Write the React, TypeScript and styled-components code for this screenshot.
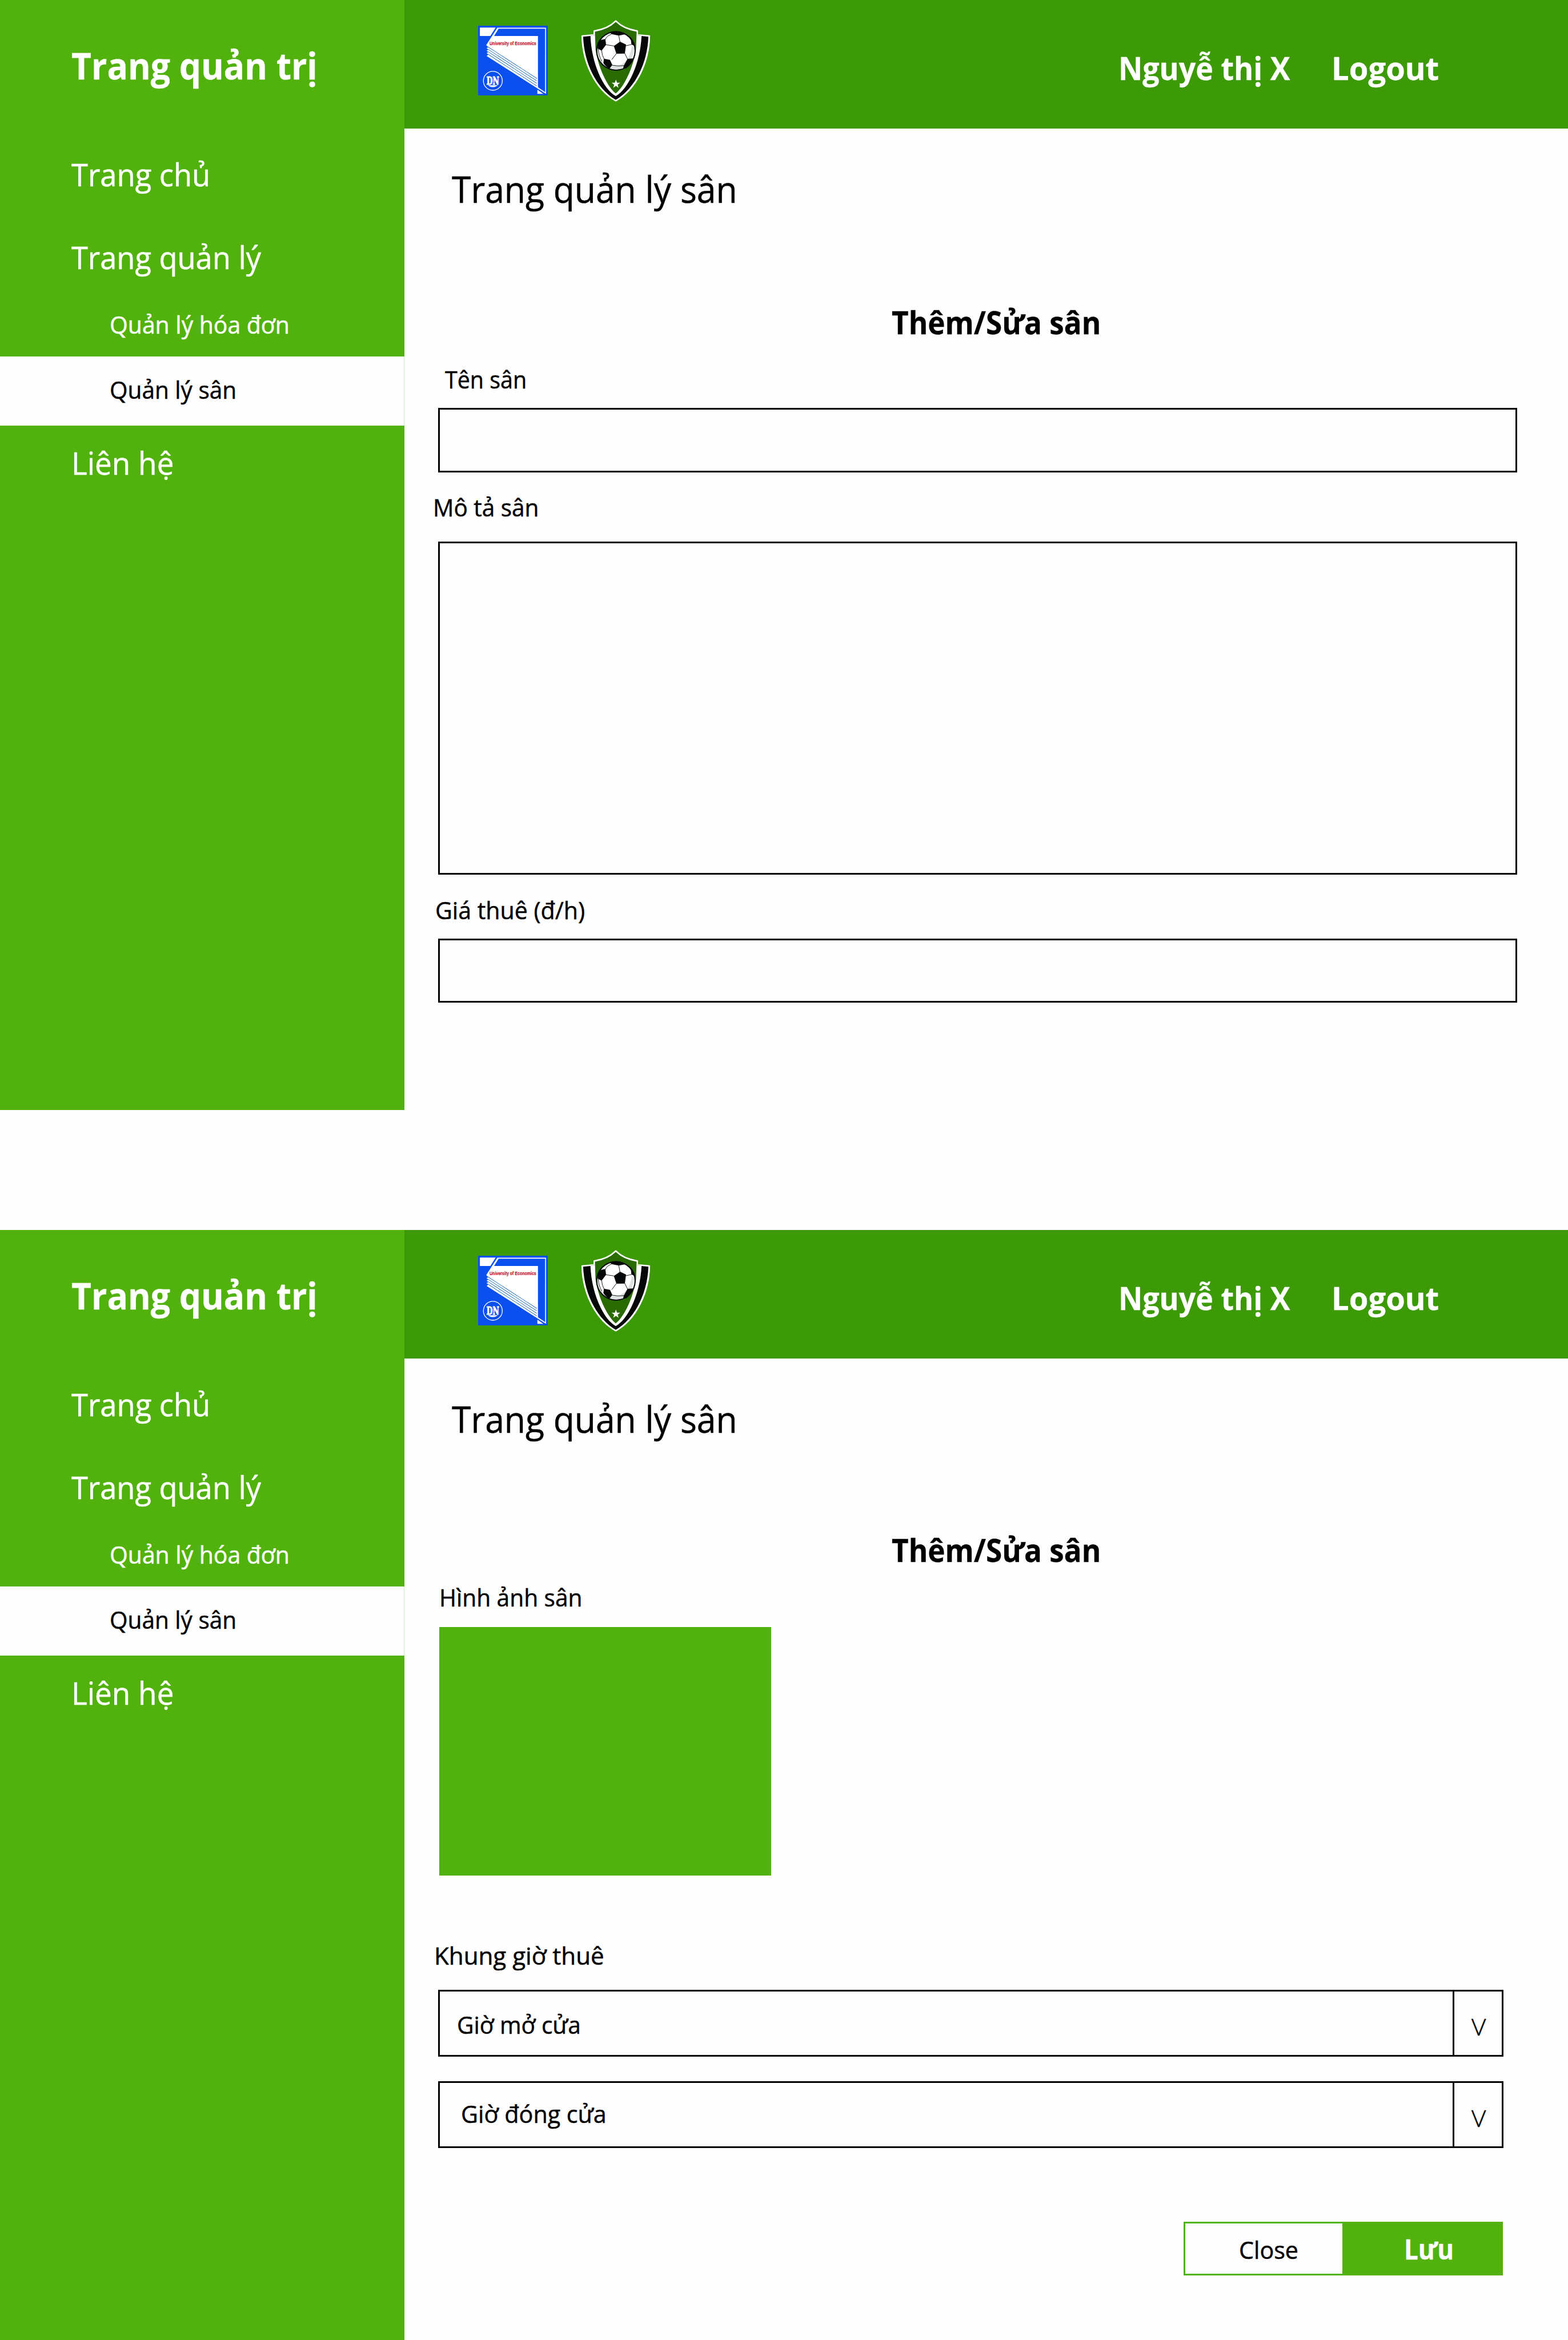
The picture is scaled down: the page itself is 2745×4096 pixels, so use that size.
import React from 'react';
import styled, { createGlobalStyle, css } from 'styled-components';

const GREEN = '#51b20e';
const DARK_GREEN = '#3b9a06';

const GlobalStyle = createGlobalStyle`
  *, *::before, *::after { box-sizing: border-box; }
  body {
    margin: 0;
    background: #fefefe;
    color: #000;
    font-family: "Open Sans", "Noto Sans", sans-serif;
  }
`;

/* Type scale: every line box is exactly one em high. */
const sizes = { title: 64, large: 55, button: 49, body: 42.7, arrow: 41 };

interface TextProps {
  $size?: keyof typeof sizes;
  $bold?: boolean;
  $fit?: number;
}

const Text = styled.span<TextProps>`
  display: block;
  width: max-content;
  white-space: nowrap;
  font-size: ${({ $size = 'body' }) => sizes[$size]}px;
  line-height: 1;
  font-weight: ${({ $bold }) => ($bold ? 700 : 400)};
  -webkit-text-stroke: ${({ $bold }) => ($bold ? 0.3 : 0.5)}px currentColor;
  transform: translateY(1px) scaleX(${({ $fit = 0.95 }) => $fit});
  transform-origin: left center;
`;

const Page = styled.div`
  display: flex;
  flex-direction: column;
  gap: 210px;
  width: 2745px;
  height: 4096px;
  overflow: hidden;
`;

const Screen = styled.section`
  display: grid;
  grid-template-columns: 708px 1fr;
  height: 1943px;
`;

const Sidebar = styled.aside`
  display: flex;
  flex-direction: column;
  background: ${GREEN};
  color: #fff;
`;

const Brand = styled.div`
  height: 225px;
  padding: 81.5px 0 0 124.8px;
`;

const NavItem = styled.div<{ $before: number }>`
  margin-top: ${({ $before }) => $before}px;
  padding-left: 125px;
`;

const SubItem = styled.div<{ $active?: boolean }>`
  height: 78px;
  padding-left: 191.6px;
  ${({ $active }) =>
    $active &&
    css`
      height: 121px;
      padding-top: 36px;
      background: #fefefe;
      border-right: 1px solid #d6eec4;
      color: #000;
    `}
`;

const SubList = styled.div`
  margin-top: 70px;
`;

const Main = styled.main`
  display: flex;
  flex-direction: column;
`;

const Header = styled.header`
  display: flex;
  flex: none;
  height: 225px;
  padding-left: 129px;
  background: ${DARK_GREEN};
  color: #fff;
`;

const LogoSlot = styled.div<{ $top: number; $gap: number }>`
  margin: ${({ $top }) => $top}px ${({ $gap }) => $gap}px 0 0;
  svg {
    display: block;
    overflow: visible;
  }
`;

const Account = styled.div`
  display: grid;
  grid-template-columns: 373.2px auto;
  align-content: start;
  padding-top: 89.9px;
`;

const Content = styled.div`
  display: flex;
  flex-direction: column;
  align-items: flex-start;
  padding-top: 73px;
`;

/* One line of copy: distance to the block above it and its indent. */
const Line = styled.div<{ $before: number; $left: number }>`
  margin: ${({ $before }) => $before}px 0 0 ${({ $left }) => $left}px;
`;

const Field = styled.div<{ $before: number; $height: number }>`
  width: 1889px;
  height: ${({ $height }) => $height}px;
  margin: ${({ $before }) => $before}px 0 0 59px;
  border: 3px solid #000;
`;

const ImageBox = styled.div`
  width: 581px;
  height: 435px;
  margin: 31px 0 0 61px;
  background: ${GREEN};
`;

const SelectBox = styled.div<{ $before: number }>`
  display: grid;
  grid-template-columns: 1fr 86px;
  width: 1865px;
  height: 117px;
  margin: ${({ $before }) => $before}px 0 0 59px;
  border: 3px solid #000;
`;

const SelectValue = styled.div<{ $left: number; $top: number }>`
  padding: ${({ $top }) => $top}px 0 0 ${({ $left }) => $left}px;
`;

const SelectArrow = styled.div`
  padding: 40.4px 0 0 30.3px;
  border-left: 3px solid #000;
  color: #050a08;
  ${Text} { font-weight: 300; }
`;

const Actions = styled.div`
  display: grid;
  grid-template-columns: 278px 281px;
  height: 94px;
  margin: 129px 0 0 1364px;
`;

const CloseButton = styled.div`
  padding: 24.4px 0 0 93.7px;
  border: 3px solid ${GREEN};
  border-right: 0;
`;

const SaveButton = styled.div`
  padding: 21.9px 0 0 108px;
  background: ${GREEN};
  color: #fff;
`;

const UniversityLogo = () => (
  <svg width="122" height="122" viewBox="90 84 468 468">
    <rect x="90" y="84" width="468" height="468" fill="#0b50ef" />
    <path d="M102 96H208L172 153H102Z" fill="#fff" />
    <path d="M219 97H546V541L147 287L157 280L147 267L157 263L147 250L157 247L147 234L157 231L145 213Z" fill="#fff" />
    <path d="M228 104H540V530L492 497V153H197Z" fill="#0b50ef" />
    <path d="M488 514L528 541H488Z" fill="#fff" />
    <g stroke="#1b69b4" strokeWidth="4" strokeDasharray="9 1.5" fill="none">
      <path d="M150 222L484 438" />
      <path d="M153 240L484 454" />
      <path d="M153 256L484 471" />
      <path d="M153 273L484 488" />
    </g>
    <text x="167" y="216" fontFamily="Liberation Sans Narrow, Liberation Sans, Arial, sans-serif" fontWeight="700" fontSize="37" fill="#c4122f" stroke="#c4122f" strokeWidth="0.8" textLength="313" lengthAdjust="spacingAndGlyphs">University of Economics</text>
    <circle cx="189" cy="454" r="63.5" fill="none" stroke="#fff" strokeWidth="5" />
    <text x="147" y="479" fontFamily="DejaVu Serif, serif" fontWeight="700" fontSize="74" fill="#fff" stroke="#fff" strokeWidth="4" textLength="84" lengthAdjust="spacingAndGlyphs">DN</text>
    <path d="M156 478Q162 496 189 496Q216 496 222 478L214 484H164Z" fill="#fff" />
  </svg>
);

const ClubLogo = () => (
  <svg width="120.5" height="143" viewBox="783 44 462 548">
    <path
      d="M1013 50Q1065 103 1158 117V143L1239 151C1236 330 1150 510 1013 586C876 510 790 330 787 151L868 143V117Q961 103 1013 50Z"
      fill="#fff" stroke="#fff" strokeWidth="9" strokeLinejoin="round"
    />
    <path
      d="M1186 151L1232 156C1226 330 1146 500 1013 580C880 500 800 330 794 156L843 151C850 330 926 505 1013 555C1100 505 1178 330 1186 151Z"
      fill="#050708"
    />
    <path d="M1013 57Q1066 108 1153 122L1149 240C1128 370 1070 490 1013 537C956 490 898 370 877 240L873 122Q960 108 1013 57Z" fill="#296b02" />
    <path d="M845 149L871 144M1181 149L1155 144" stroke="#6c7a6c" strokeWidth="1.5" />
    <circle cx="1014" cy="251" r="133" fill="#050708" />
    <circle cx="1014" cy="251" r="125" fill="#fff" />
    <path d="M1119 215Q1146 228 1130 270L1118 303L1092 305Q1118 260 1119 215ZM974 366L994 350L1066 351L1062 369Q1013 384 974 366ZM1030 348Q1066 340 1088 308L1068 350Z" fill="#dde1e1" />
    <g fill="#050708">
      <path d="M1042 190L1082 209L1074 269L1017 270L1000 218Z" />
      <path d="M943 171L948 210L918 250L891 236Q890 200 912 178Z" />
      <path d="M976 130Q1020 112 1068 131L1076 140L1033 148L984 139Z" />
      <path d="M1098 148Q1136 175 1144 220L1118 208L1115 180Z" />
      <path d="M933 304L974 311L990 346L970 372Q944 356 930 332Z" />
      <path d="M1092 305L1128 302Q1124 336 1084 368L1062 370L1067 350Z" />
    </g>
    <g fill="none" stroke="#050708" strokeWidth="3.5">
      <path d="M948 210L1000 218M1033 146L1041 192M1080 217L1120 208M1018 268L986 310M1073 267L1093 308M988 347Q1030 356 1068 350M918 248Q920 282 935 306M943 175Q952 150 984 139M896 238Q896 280 920 322" />
    </g>
    <path d="M1014 444L1021 465L1043 465L1025.500 478L1032 499L1014 486L996 499L1002.500 478L985 465L1007 465Z" fill="#fff" />
  </svg>
);

const Shell = ({ children }: { children: React.ReactNode }) => (
  <Screen>
    <Sidebar>
      <Brand><Text $size="title" $bold $fit={0.945}>Trang quản trị</Text></Brand>
      <NavItem $before={51}><Text $size="large" $fit={0.954}>Trang chủ</Text></NavItem>
      <NavItem $before={90}><Text $size="large" $fit={0.952}>Trang quản lý</Text></NavItem>
      <SubList>
        <SubItem><Text $fit={0.958}>Quản lý hóa đơn</Text></SubItem>
        <SubItem $active><Text>Quản lý sân</Text></SubItem>
      </SubList>
      <NavItem $before={36}><Text $size="large" $fit={0.964}>Liên hệ</Text></NavItem>
    </Sidebar>
    <Main>
      <Header>
        <LogoSlot $top={45} $gap={59}><UniversityLogo /></LogoSlot>
        <LogoSlot $top={35} $gap={819}><ClubLogo /></LogoSlot>
        <Account>
          <Text $size="large" $bold $fit={0.945}>Nguyễ thị X</Text>
          <Text $size="large" $bold $fit={0.989}>Logout</Text>
        </Account>
      </Header>
      <Content>{children}</Content>
    </Main>
  </Screen>
);

const PageTitle = () => (
  <Line $before={0} $left={82.7}><Text $size="title" $fit={0.947}>Trang quản lý sân</Text></Line>
);

const FormTitle = ({ before }: { before: number }) => (
  <Line $before={before} $left={853.3}><Text $size="large" $bold $fit={0.931}>Thêm/Sửa sân</Text></Line>
);

interface SelectProps {
  before: number;
  label: string;
  left: number;
  top: number;
  fit: number;
}

const Select = ({ before, label, left, top, fit }: SelectProps) => (
  <SelectBox $before={before}>
    <SelectValue $left={left} $top={top}><Text $fit={fit}>{label}</Text></SelectValue>
    <SelectArrow><Text $size="arrow" $fit={1.07}>V</Text></SelectArrow>
  </SelectBox>
);

export default function App() {
  return (
    <>
      <GlobalStyle />
      <Page>
        <Shell>
          <PageTitle />
          <FormTitle before={173} />
          <Line $before={51.5} $left={71}><Text $fit={0.924}>Tên sân</Text></Line>
          <Field $before={29.8} $height={113} />
          <Line $before={39} $left={50.4}><Text $fit={0.949}>Mô tả sân</Text></Line>
          <Field $before={39.3} $height={583} />
          <Line $before={39.5} $left={54.1}><Text $fit={0.962}>Giá thuê (đ/h)</Text></Line>
          <Field $before={29.8} $height={112} />
        </Shell>
        <Shell>
          <PageTitle />
          <FormTitle before={169.2} />
          <Line $before={34.9} $left={60.8}><Text $fit={0.952}>Hình ảnh sân</Text></Line>
          <ImageBox />
          <Line $before={118.4} $left={51.6}><Text $fit={0.987}>Khung giờ thuê</Text></Line>
          <Select before={38.9} label="Giờ mở cửa" left={30.4} top={36.3} fit={0.95} />
          <Select before={43.2} label="Giờ đóng cửa" left={37} top={32.5} fit={0.966} />
          <Actions>
            <CloseButton><Text $fit={0.966}>Close</Text></CloseButton>
            <SaveButton><Text $size="button" $bold $fit={0.896}>Lưu</Text></SaveButton>
          </Actions>
        </Shell>
      </Page>
    </>
  );
}
